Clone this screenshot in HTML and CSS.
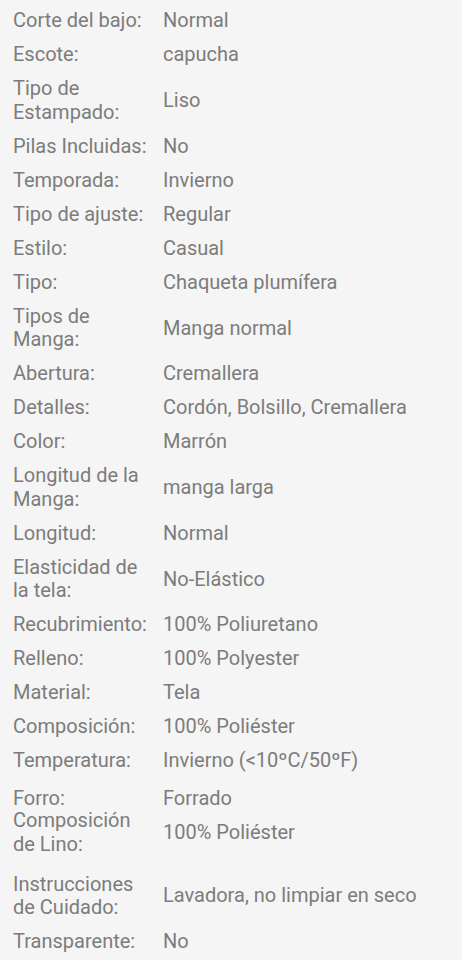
FILE: index.html
```html
<!DOCTYPE html>
<html lang="es">
<head>
<meta charset="utf-8">
<title>Especificaciones</title>
<link rel="stylesheet" href="styles.css">
</head>
<body>
<dl class="specs">
  <div class="row"><dt class="label">Corte del bajo:</dt><dd class="value">Normal</dd></div>
  <div class="row"><dt class="label">Escote:</dt><dd class="value">capucha</dd></div>
  <div class="row"><dt class="label">Tipo de Estampado:</dt><dd class="value">Liso</dd></div>
  <div class="row"><dt class="label">Pilas Incluidas:</dt><dd class="value">No</dd></div>
  <div class="row"><dt class="label">Temporada:</dt><dd class="value">Invierno</dd></div>
  <div class="row"><dt class="label">Tipo de ajuste:</dt><dd class="value">Regular</dd></div>
  <div class="row"><dt class="label">Estilo:</dt><dd class="value">Casual</dd></div>
  <div class="row"><dt class="label">Tipo:</dt><dd class="value">Chaqueta plumífera</dd></div>
  <div class="row"><dt class="label">Tipos de Manga:</dt><dd class="value">Manga normal</dd></div>
  <div class="row"><dt class="label">Abertura:</dt><dd class="value">Cremallera</dd></div>
  <div class="row"><dt class="label">Detalles:</dt><dd class="value">Cordón, Bolsillo, Cremallera</dd></div>
  <div class="row"><dt class="label">Color:</dt><dd class="value">Marrón</dd></div>
  <div class="row"><dt class="label">Longitud de la Manga:</dt><dd class="value">manga larga</dd></div>
  <div class="row"><dt class="label">Longitud:</dt><dd class="value">Normal</dd></div>
  <div class="row"><dt class="label">Elasticidad de la tela:</dt><dd class="value">No-Elástico</dd></div>
  <div class="row"><dt class="label">Recubrimiento:</dt><dd class="value">100% Poliuretano</dd></div>
  <div class="row"><dt class="label">Relleno:</dt><dd class="value">100% Polyester</dd></div>
  <div class="row"><dt class="label">Material:</dt><dd class="value">Tela</dd></div>
  <div class="row"><dt class="label">Composición:</dt><dd class="value">100% Poliéster</dd></div>
  <div class="row"><dt class="label">Temperatura:</dt><dd class="value">Invierno (&lt;10ºC/50ºF)</dd></div>
  <div class="row row--tight"><dt class="label">Forro:</dt><dd class="value">Forrado</dd></div>
  <div class="row row--loose"><dt class="label">Composición de Lino:</dt><dd class="value">100% Poliéster</dd></div>
  <div class="row"><dt class="label">Instrucciones de Cuidado:</dt><dd class="value">Lavadora, no limpiar en seco</dd></div>
  <div class="row"><dt class="label">Transparente:</dt><dd class="value">No</dd></div>
</dl>
</body>
</html>
```
FILE: styles.css
```css
html, body {
  margin: 0;
  padding: 0;
  background: #f5f5f5;
}

body {
  font-family: Roboto, "Noto Sans", sans-serif;
  font-size: 20px;
  line-height: 23.5px;
  color: #7c7c7c;
}

.specs {
  margin: 0;
  padding: 4px 13px 0;
}

.row {
  display: grid;
  grid-template-columns: 134px 1fr;
  column-gap: 16px;
  align-items: center;
  padding: 5.25px 0;
}

.row--tight {
  padding-top: 9.25px;
  padding-bottom: 0;
  margin-bottom: -7px;
}

.row--loose {
  padding-bottom: 11.25px;
}

.label,
.value {
  margin: 0;
}

.label {
  align-self: start;
}
```
